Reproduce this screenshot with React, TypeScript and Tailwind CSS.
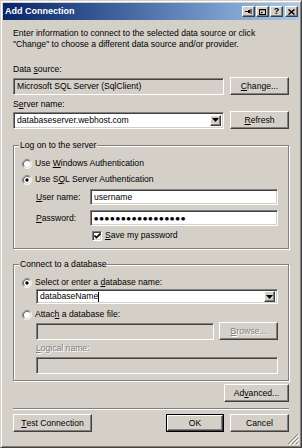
import React from "react";

// mnemonic underline
function U({ children }: { children: React.ReactNode }) {
  return <span className="underline underline-offset-[1px]">{children}</span>;
}

function Field({
  className = "",
  disabled,
  children,
}: {
  className?: string;
  disabled?: boolean;
  children?: React.ReactNode;
}) {
  return (
    <div
      className={`flex items-center border border-t-[#808080] border-l-[#808080] border-b-white border-r-white shadow-[inset_1px_1px_0_#404040,inset_-1px_-1px_0_#d4d0c8] pl-[3px] ${
        disabled ? "bg-[#d4d0c8]" : "bg-white"
      } ${className}`}
    >
      {children}
    </div>
  );
}

function DropArrow() {
  return (
    <div className="ml-auto mr-[2px] w-[11px] h-[11px] flex items-center justify-center bg-[#d4d0c8] border border-t-white border-l-white border-b-[#404040] border-r-[#404040] shadow-[inset_-1px_-1px_0_#808080]">
      <svg width="7" height="4" viewBox="0 0 7 4">
        <path d="M0 0h7L3.5 4z" fill="#000" />
      </svg>
    </div>
  );
}

function Button({
  className = "",
  disabled,
  children,
}: {
  className?: string;
  disabled?: boolean;
  children: React.ReactNode;
}) {
  return (
    <button
      type="button"
      className={`flex items-center justify-center bg-[#d4d0c8] border border-t-white border-l-white border-b-[#404040] border-r-[#404040] shadow-[inset_-1px_-1px_0_#808080] ${
        disabled ? "text-[#808080] [text-shadow:1px_1px_0_#fff]" : "text-black"
      } ${className}`}
    >
      {children}
    </button>
  );
}

function Radio({ checked }: { checked?: boolean }) {
  return (
    <svg width="10" height="10" viewBox="0 0 12 12" className="shrink-0">
      <circle cx="6" cy="6" r="5" fill="#fff" />
      <path d="M2.11 9.89A5.5 5.5 0 0 1 9.89 2.11" fill="none" stroke="#808080" />
      <path d="M9.89 2.11A5.5 5.5 0 0 1 2.11 9.89" fill="none" stroke="#fff" />
      <path d="M2.82 9.18A4.5 4.5 0 0 1 9.18 2.82" fill="none" stroke="#404040" />
      <path d="M9.18 2.82A4.5 4.5 0 0 1 2.82 9.18" fill="none" stroke="#d4d0c8" />
      {checked && <circle cx="6" cy="6" r="2" fill="#000" />}
    </svg>
  );
}

function Check() {
  return (
    <div className="w-[10px] h-[10px] bg-white border border-t-[#808080] border-l-[#808080] border-b-white border-r-white shadow-[inset_1px_1px_0_#404040,inset_-1px_-1px_0_#d4d0c8] flex items-center justify-center">
      <svg width="7" height="6" viewBox="0 0 7 6">
        <path d="M0.5 2.5L2.5 4.5L6.5 0.5" fill="none" stroke="#000" strokeWidth="1.6" />
      </svg>
    </div>
  );
}

function CaptionButton({ children }: { children: React.ReactNode }) {
  return (
    <div className="w-[13px] h-[11px] flex items-center justify-center bg-[#d4d0c8] border border-t-white border-l-white border-b-[#404040] border-r-[#404040] shadow-[inset_-1px_-1px_0_#808080]">
      {children}
    </div>
  );
}

function Disabled({ children }: { children: React.ReactNode }) {
  return <span className="text-[#808080] [text-shadow:1px_1px_0_#fff]">{children}</span>;
}

export default function App() {
  return (
    <div className="relative w-[302px] h-[448px] bg-[#d4d0c8] font-['Liberation_Sans',Arial,sans-serif] text-[8.6px] leading-[11px] text-black select-none">
      <div className="h-full flex flex-col border border-t-[#d4d0c8] border-l-[#d4d0c8] border-b-[#404040] border-r-[#404040] shadow-[inset_1px_1px_0_#fff,inset_-1px_-1px_0_#808080] p-[2px]">
        {/* title bar */}
        <div className="h-[17px] flex items-center pl-[2px] bg-linear-to-r from-[#0a246a] to-[#a6caf0]">
          <span className="text-white font-bold text-[9px]">Add Connection</span>
          <div className="ml-auto mr-[1px] flex gap-[1px]">
            <CaptionButton>
              <svg width="7" height="5" viewBox="0 0 7 5">
                <path d="M0 2.5h3" stroke="#000" />
                <rect x="3" y="1" width="2" height="3" fill="#000" />
                <path d="M6 0v5" stroke="#000" />
              </svg>
            </CaptionButton>
            <CaptionButton>
              <svg width="7" height="6" viewBox="0 0 7 6">
                <rect x="0.5" y="0.5" width="6" height="5" fill="none" stroke="#000" />
                <path d="M0 0.5h7" stroke="#000" strokeWidth="1.5" />
                <path d="M2 2.5l2 1-2 1z" fill="#000" />
              </svg>
            </CaptionButton>
            <CaptionButton>
              <span className="font-bold text-[9px] leading-none">?</span>
            </CaptionButton>
            <div className="ml-[1px]">
              <CaptionButton>
                <svg width="7" height="6" viewBox="0 0 7 6">
                  <path d="M0.5 0.5l6 5M6.5 0.5l-6 5" stroke="#000" strokeWidth="1.5" />
                </svg>
              </CaptionButton>
            </div>
          </div>
        </div>

        <div className="flex flex-col px-[10px]">
          <p className="mt-[8px] whitespace-nowrap">
            Enter information to connect to the selected data source or click
            <br />
            "Change" to choose a different data source and/or provider.
          </p>

          <div className="mt-[14px]">
            Data <U>s</U>ource:
          </div>
          <div className="mt-[2px] flex items-center h-[18px]">
            <Field disabled className="w-[211px] h-[17px]">
              Microsoft SQL Server (SqlClient)
            </Field>
            <Button className="ml-auto w-[59px] h-[18px]">
              <U>C</U>hange...
            </Button>
          </div>

          <div className="mt-[4px]">
            S<U>e</U>rver name:
          </div>
          <div className="mt-[1px] flex items-center h-[18px]">
            <Field className="w-[211px] h-[17px]">
              databaseserver.webhost.com
              <DropArrow />
            </Field>
            <Button className="ml-auto w-[59px] h-[18px]">
              <U>R</U>efresh
            </Button>
          </div>

          {/* log on group */}
          <fieldset className="mt-[11px] border border-[#808080] shadow-[1px_1px_0_#fff,inset_1px_1px_0_#fff] pl-[8px] pr-[10px] pt-[7px] pb-[7px]">
            <legend className="ml-[-3px] px-[1px] bg-[#d4d0c8]">Log on to the server</legend>
            <div className="flex items-center h-[11px]">
              <Radio />
              <span className="ml-[3px]">
                Use <U>W</U>indows Authentication
              </span>
            </div>
            <div className="mt-[5px] flex items-center h-[11px]">
              <Radio checked />
              <span className="ml-[3px]">
                Use S<U>Q</U>L Server Authentication
              </span>
            </div>
            <div className="mt-[4px] flex items-center pl-[14px]">
              <span className="w-[54px]">
                <U>U</U>ser name:
              </span>
              <Field className="flex-1 h-[16px]">username</Field>
            </div>
            <div className="mt-[5px] flex items-center pl-[14px]">
              <span className="w-[54px]">
                <U>P</U>assword:
              </span>
              <Field className="flex-1 h-[16px]">
                <span className="font-['DejaVu_Sans',sans-serif] text-[4.8px] tracking-[1.25px]">
                  ●●●●●●●●●●●●●●●●●
                </span>
              </Field>
            </div>
            <div className="mt-[4px] flex items-center h-[11px] pl-[70px]">
              <Check />
              <span className="ml-[3px]">
                <U>S</U>ave my password
              </span>
            </div>
          </fieldset>

          {/* database group */}
          <fieldset className="mt-[10px] border border-[#808080] shadow-[1px_1px_0_#fff,inset_1px_1px_0_#fff] pl-[8px] pr-[10px] pt-[7px] pb-[6px]">
            <legend className="ml-[-3px] px-[1px] bg-[#d4d0c8]">Connect to a database</legend>
            <div className="flex items-center h-[11px]">
              <Radio checked />
              <span className="ml-[3px]">
                Select or enter a <U>d</U>atabase name:
              </span>
            </div>
            <div className="mt-[1px] pl-[14px]">
              <Field className="h-[15px]">
                databaseName
                <span className="w-px h-[10px] bg-black" />
                <DropArrow />
              </Field>
            </div>
            <div className="mt-[5px] flex items-center h-[11px]">
              <Radio />
              <span className="ml-[3px]">
                Attac<U>h</U> a database file:
              </span>
            </div>
            <div className="mt-[2px] flex items-center pl-[14px]">
              <Field disabled className="w-[178px] h-[17px]" />
              <Button disabled className="ml-auto w-[59px] h-[18px]">
                <U>B</U>rowse...
              </Button>
            </div>
            <div className="mt-[3px] pl-[14px]">
              <Disabled>
                <U>L</U>ogical name:
              </Disabled>
            </div>
            <div className="mt-[3px] pl-[14px]">
              <Field disabled className="h-[17px]" />
            </div>
          </fieldset>

          <div className="mt-[3px] flex justify-end">
            <Button className="w-[65px] h-[18px]">
              Ad<U>v</U>anced...
            </Button>
          </div>

          <div className="mt-[6px] border-t border-b border-t-[#808080] border-b-white" />

          <div className="mt-[4px] flex items-center">
            <Button className="w-[79px] h-[18px]">
              <U>T</U>est Connection
            </Button>
            <div className="ml-auto border border-black">
              <Button className="w-[56px] h-[16px]">OK</Button>
            </div>
            <Button className="ml-[6px] w-[59px] h-[18px]">Cancel</Button>
          </div>
        </div>
      </div>

      {/* size grip */}
      <svg width="12" height="12" viewBox="0 0 12 12" className="absolute right-[3px] bottom-[3px]">
        <path d="M11 1L1 11M11 5L5 11M11 9L9 11" stroke="#808080" />
        <path d="M12 2L2 12M12 6L6 12M12 10L10 12" stroke="#fff" />
      </svg>
    </div>
  );
}
